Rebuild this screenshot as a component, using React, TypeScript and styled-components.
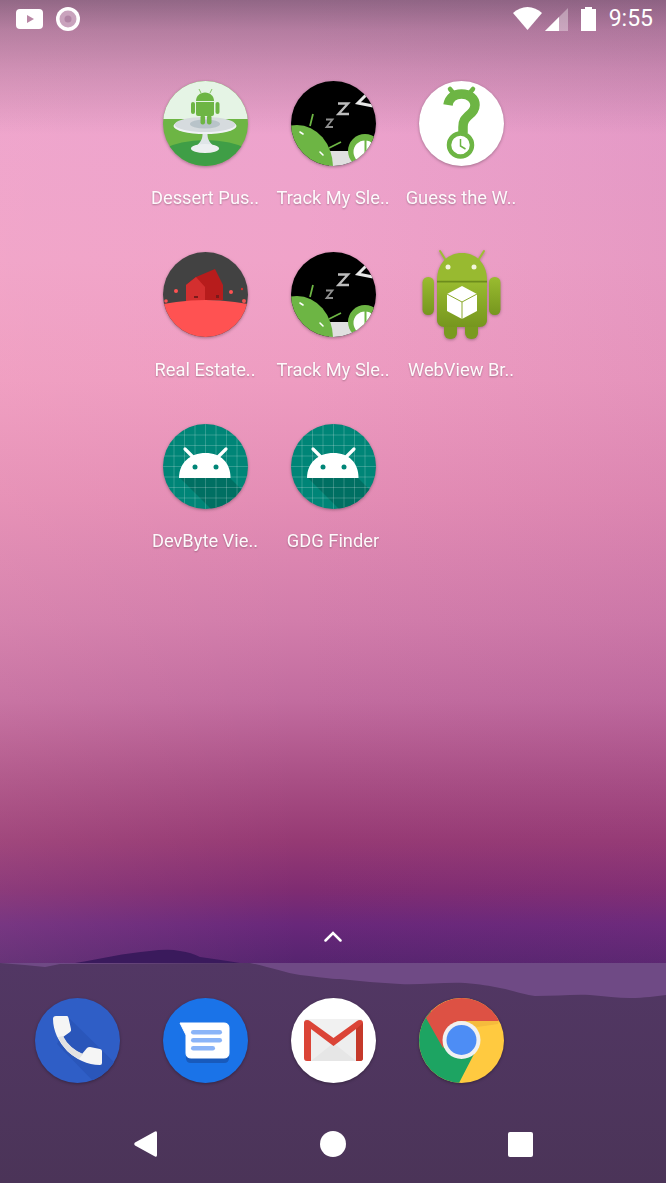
import styled, { createGlobalStyle } from 'styled-components';

const GlobalStyle = createGlobalStyle`
  html, body {
    margin: 0;
    padding: 0;
    background: #4c3459;
  }
`;

const Phone = styled.div`
  position: relative;
  width: 666px;
  height: 1183px;
  overflow: hidden;
  display: flex;
  flex-direction: column;
  font-family: Roboto, "Liberation Sans", sans-serif;
  background:
    linear-gradient(
      180deg,
      rgba(60, 50, 70, 0.5) 0px,
      rgba(60, 50, 70, 0.3) 30px,
      rgba(60, 50, 70, 0.16) 70px,
      rgba(60, 50, 70, 0) 135px
    ),
    linear-gradient(90deg, rgba(255, 190, 200, 0.1) 0%, rgba(255, 190, 200, 0) 45%, rgba(150, 70, 140, 0.1) 100%),
    linear-gradient(
      180deg,
      #e79bc6 0px,
      #eda3cd 130px,
      #f0a3c9 260px,
      #ee9cc1 380px,
      #e48db5 500px,
      #d27dab 620px,
      #c26c9f 700px,
      #a94f85 780px,
      #963a74 840px,
      #7f2c72 890px,
      #68277a 925px,
      #56246f 963px
    );
`;

const StatusBar = styled.header`
  flex: none;
  height: 38px;
  padding: 0 13px 0 16px;
  display: flex;
  align-items: center;
  gap: 13px;
`;

const StatusRight = styled.div`
  margin-left: auto;
  display: flex;
  align-items: center;
`;

const Clock = styled.span`
  margin-left: 13px;
  color: #fff;
  font-size: 23px;
  line-height: 38px;
  font-weight: 400;
`;

const Workspace = styled.main`
  flex: 1;
  padding: 43px 13px 0;
  display: grid;
  grid-template-columns: repeat(5, 128px);
  grid-auto-rows: 171.5px;
  align-content: start;
`;

const AppCell = styled.div`
  display: flex;
  flex-direction: column;
  align-items: center;
`;

const IconBox = styled.div`
  width: 85px;
  height: 85px;
  flex: none;
  svg {
    display: block;
    overflow: visible;
    filter: drop-shadow(0 1px 1.5px rgba(0, 0, 0, 0.3));
  }
`;

const WorkspaceIcon = styled(IconBox)`
  margin-top: -0.4px;
`;

const AppLabel = styled.span`
  margin-top: 20.4px;
  color: #fff;
  font-size: 18.3px;
  line-height: 24px;
  white-space: nowrap;
  opacity: 0.95;
  text-shadow: 0 1px 2px rgba(0, 0, 0, 0.3);
`;

const CaretRow = styled.div`
  flex: none;
  height: 32px;
  display: flex;
  justify-content: center;
  align-items: flex-start;
`;

const Dock = styled.footer`
  position: relative;
  flex: none;
  height: 220px;
  background: #6f4a85;
`;

const Hills = styled.svg`
  position: absolute;
  left: 0;
  top: -20px;
`;

const DockRow = styled.div`
  position: relative;
  padding: 35px 13px 0;
  display: grid;
  grid-template-columns: repeat(5, 128px);
  justify-items: center;
`;

const NavBar = styled.nav`
  position: relative;
  margin-top: 48px;
  display: grid;
  grid-template-columns: repeat(3, 187.5px);
  justify-content: center;
  justify-items: center;
  align-items: center;
  height: 26px;
`;

const HomeButton = styled.span`
  width: 26px;
  height: 26px;
  border-radius: 50%;
  background: #fff;
`;

const RecentButton = styled.span`
  width: 25px;
  height: 25px;
  border-radius: 2px;
  background: #fff;
`;

const Disc = ({ id, children }: { id: string; children: React.ReactNode }) => (
  <svg width="85" height="85" viewBox="0 0 85 85">
    <clipPath id={id}>
      <circle cx="42.5" cy="42.5" r="42.5" />
    </clipPath>
    <g clipPath={`url(#${id})`}>{children}</g>
  </svg>
);

const DessertIcon = () => (
  <Disc id="dessert">
    <rect width="85" height="85" fill="#6db544" />
    <rect width="85" height="38" fill="#e5f4e5" />
    <ellipse cx="42.5" cy="92" rx="62" ry="33" fill="#3f9e46" />
    <path d="M36 8l2 4M49 8l-2 4" stroke="#6db544" strokeWidth="0.8" />
    <path d="M33 20c0-5 4-8.500 9-8.500s9 3.500 9 8.500z" fill="#6db544" />
    <path d="M33 21h18v12q0 2-2 2H35q-2 0-2-2z" fill="#6db544" />
    <rect x="28" y="21" width="4" height="12" rx="2" fill="#6db544" />
    <rect x="52.500" y="21" width="4" height="12" rx="2" fill="#6db544" />
    <ellipse cx="42" cy="45" rx="31.500" ry="8" fill="#f0f2f4" />
    <ellipse cx="42" cy="43.500" rx="30.500" ry="7.500" fill="#d6dbde" />
    <ellipse cx="42" cy="43" rx="15" ry="4.500" fill="#b8c3c9" />
    <rect x="37.500" y="34" width="4.500" height="9.500" rx="2" fill="#6db544" />
    <rect x="44" y="34" width="4.500" height="9.500" rx="2" fill="#6db544" />
    <path d="M39.500 53h5c0 4 1 7 5 11H34.500c4-4 5-7 5-11z" fill="#dfe5e8" />
    <ellipse cx="42" cy="67.500" rx="14" ry="4.500" fill="#eceff1" />
  </Disc>
);

const SleepIcon = ({ id }: { id: string }) => (
  <Disc id={id}>
    <rect width="85" height="85" fill="#000" />
    <rect x="38" y="70" width="47" height="15" fill="#e0e0e0" />
    <path d="M19 45l3-12M38 67l12-6" stroke="#6db544" strokeWidth="1.800" />
    <ellipse cx="6" cy="86" rx="36" ry="42" fill="#6db544" />
    <path d="M9 51l3 2M29 71l3 3" stroke="#fff" strokeWidth="1.600" strokeLinecap="round" />
    <circle cx="74" cy="70" r="17" fill="#6db544" />
    <circle cx="74" cy="71" r="11.500" fill="#fff" />
    <path d="M74.500 59v16" stroke="#6db544" strokeWidth="2" />
    <path d="M35 38.500h6.500L35.500 46H42" fill="none" stroke="#8f8f8f" strokeWidth="1.800" />
    <path d="M47 22.500h10L47.500 33H58" fill="none" stroke="#bdbdbd" strokeWidth="2.400" />
    <path d="M78 11L67 22l15 3" fill="none" stroke="#e8e8e8" strokeWidth="3" />
    <path d="M64 4l5-1" stroke="#fff" strokeWidth="2" />
  </Disc>
);

const GuessIcon = () => (
  <Disc id="guess">
    <rect width="85" height="85" fill="#fff" />
    <path d="M31 8l5 6M54 8l-5 6" stroke="#6db544" strokeWidth="4.500" strokeLinecap="round" />
    <path
      d="M29 24c1-7 6-11 13.500-11 8 0 13.500 5 13.500 11 0 5-3 8-7 11-3 3-5 5-5 11v6"
      fill="none"
      stroke="#6db544"
      strokeWidth="9.500"
    />
    <circle cx="41.500" cy="64" r="11.500" fill="#fff" stroke="#6db544" strokeWidth="4.500" />
    <path d="M41.500 58v7l5 3" fill="none" stroke="#6db544" strokeWidth="1.500" />
  </Disc>
);

const EstateIcon = () => (
  <Disc id="estate">
    <rect width="85" height="85" fill="#424242" />
    <path d="M23 33l10-8 19-8 8 16v15H23z" fill="#b71c1c" />
    <path d="M23 33l10-8 9 10v15H23z" fill="#d32f2f" />
    <path d="M31 44h4v2h-4zM53 43h3v3h-3z" fill="#7a1a1a" />
    <circle cx="13" cy="39" r="2" fill="#ff5252" />
    <circle cx="68" cy="40" r="2" fill="#ff5252" />
    <circle cx="79" cy="37" r="1.200" fill="#d32f2f" />
    <circle cx="3" cy="49" r="1.800" fill="#ff5252" />
    <circle cx="81" cy="49" r="2" fill="#ef5350" />
    <ellipse cx="42.500" cy="148" rx="150" ry="100" fill="#ff5252" />
  </Disc>
);

const WebViewIcon = () => (
  <svg width="85" height="85" viewBox="0 0 85 85">
    <defs>
      <linearGradient id="wv" x1="0" y1="0" x2="0" y2="1">
        <stop offset="0" stopColor="#9abc30" />
        <stop offset="1" stopColor="#76961e" />
      </linearGradient>
    </defs>
    <g transform="translate(-1 0)">
      <path d="M27 7l-5-8M61 7l5-8" stroke="#9dbf33" strokeWidth="2" strokeLinecap="round" />
      <rect x="4.500" y="25" width="11.500" height="38" rx="5.500" fill="url(#wv)" />
      <rect x="71" y="25" width="11.500" height="38" rx="5.500" fill="url(#wv)" />
      <rect x="26" y="62" width="13" height="25" rx="6" fill="#7a9a20" />
      <rect x="47" y="62" width="13" height="25" rx="6" fill="#7a9a20" />
      <path d="M19 28h50v40c0 4-3 7-7 7H26c-4 0-7-3-7-7z" fill="url(#wv)" />
      <rect x="19" y="28.500" width="50" height="2" fill="#6d8c1c" />
      <path d="M19 28.500C19 10 31 1 44 1s25 9 25 27.500z" fill="#98ba30" />
      <circle cx="30" cy="15" r="2.500" fill="#f3f6dc" />
      <circle cx="56" cy="15" r="2.500" fill="#f3f6dc" />
      <path d="M44 34l15 8v17l-15 8-15-8V42z" fill="#fff" />
      <path d="M29 42l15 8 15-8M44 50v17" fill="none" stroke="#8aa82a" strokeWidth="1" />
    </g>
  </svg>
);

const DefaultIcon = ({ id }: { id: string }) => (
  <Disc id={id}>
    <rect width="85" height="85" fill="#008577" />
    <path d="M17 54h50l28 28v3H48z" fill="#00695c" opacity="0.8" />
    <g stroke="#fff" strokeOpacity="0.25" strokeWidth="0.800">
      {[11, 21.500, 32, 42.500, 53, 63.500, 74].map((p) => (
        <path key={p} d={`M${p} 0v85M0 ${p}h85`} />
      ))}
    </g>
    <path d="M22 25l8 8M63 25l-8 8" stroke="#fff" strokeWidth="3.200" strokeLinecap="round" />
    <path d="M16 54c0-15 11-25 26.500-25S67.500 39 67.500 54z" fill="#fff" />
    <circle cx="32" cy="43" r="2.500" fill="#008577" />
    <circle cx="53" cy="43" r="2.500" fill="#008577" />
  </Disc>
);

const PhoneIcon = () => (
  <Disc id="dial">
    <rect width="85" height="85" fill="#2f5ec6" />
    <path d="M34 20L85 70v15H60L22 46z" fill="#2a56ba" />
    <path
      d="M21 18h11q1 0 1.500 2l2.500 11q.5 2-1 3l-7 5q6 11 19 17l5-6q1-1 3-1l10 2q2 .5 2 2v12q0 2-2 2C40 67 18 44 18 21q0-3 3-3z"
      fill="#f5f5f5"
    />
    <path d="M23 39l5-1q6 12 20 18l-4 5q-14-6-21-22z" fill="#e2e2e2" />
  </Disc>
);

const MessagesIcon = () => (
  <Disc id="messages">
    <rect width="85" height="85" fill="#1a73e8" />
    <path d="M23 50h43v10q0 5-5 5H28q-5 0-5-5z" fill="#185abc" />
    <path d="M17 25h44q5 0 5 5v25q0 5-5 5H28q-5 0-5-5V37z" fill="#fff" stroke="#fff" strokeLinejoin="round" />
    <rect x="28" y="32" width="31" height="4.500" rx="2.250" fill="#8ab4f8" />
    <rect x="28" y="40" width="31" height="4.500" rx="2.250" fill="#8ab4f8" />
    <rect x="28" y="48" width="24" height="4.500" rx="2.250" fill="#8ab4f8" />
  </Disc>
);

const GmailIcon = () => (
  <Disc id="gmail">
    <rect width="85" height="85" fill="#fff" />
    <rect x="14" y="21" width="57" height="42" fill="#eeeeee" />
    <path d="M20 63l22.500-18L65 63z" fill="#e6e6e6" />
    <path d="M14 21h57v2L42.500 44 14 23z" fill="#f1f1f1" />
    <path d="M13 25q0-3 3-3 2 0 3 1l23.500 17L66 23q1-1 3-1 3 0 3 3v35q0 3-3 3h-4V31L42.500 48 20 31v32h-4q-3 0-3-3z" fill="#db4437" />
    <path d="M65 31l7-6v35q0 3-3 3h-4z" fill="#c5392a" />
  </Disc>
);

const ChromeIcon = () => (
  <Disc id="chrome">
    <rect width="85" height="85" fill="#ffca40" />
    <path d="M0 0h7L25 50l30 6-15 29H0z" fill="#1da462" />
    <path d="M7 20C15 8 28 0 42.500 0 60 0 74 9 80 23H42.500C34 23 27 28 24 50z" fill="#dd5144" />
    <path d="M42.500 23H80l-1 3-21 3z" fill="#e8a83a" opacity="0.45" />
    <circle cx="42.500" cy="42" r="19" fill="#f1f1f1" />
    <circle cx="42.500" cy="42" r="15" fill="#4d8df5" />
  </Disc>
);

const YoutubeIcon = () => (
  <svg width="27" height="20" viewBox="0 0 27 20">
    <rect width="27" height="20" rx="4" fill="#fff" />
    <path d="M11 6v8l7-4z" fill="#b987a5" />
  </svg>
);

const RecordIcon = () => (
  <svg width="24" height="24" viewBox="0 0 24 24">
    <circle cx="12" cy="12" r="12" fill="#fff" />
    <circle cx="12" cy="12" r="8.500" fill="#c9a3bd" />
    <circle cx="12" cy="12" r="3.500" fill="#b084a4" />
  </svg>
);

const WifiIcon = () => (
  <svg width="29" height="24" viewBox="0 0 29 24">
    <path d="M14.500 23L0 6C4 2.500 9 0 14.500 0S25 2.500 29 6z" fill="#fff" />
  </svg>
);

const SignalIcon = () => (
  <svg width="23" height="23" viewBox="0 0 23 23" style={{ marginLeft: 3 }}>
    <path d="M0 23L23 0v23z" fill="#fff" fillOpacity="0.35" />
    <path d="M0 23L14 9v14z" fill="#fff" />
  </svg>
);

const BatteryIcon = () => (
  <svg width="15" height="24" viewBox="0 0 15 24" style={{ marginLeft: 13 }}>
    <path d="M4 2V0h7v2h4v22H0V2z" fill="#fff" />
  </svg>
);

const CaretIcon = () => (
  <svg width="18" height="11" viewBox="0 0 18 11">
    <path d="M1.500 9.500L9 2l7.500 7.500" fill="none" stroke="#fff" strokeWidth="2.500" strokeLinecap="round" />
  </svg>
);

const BackIcon = () => (
  <svg width="23" height="26" viewBox="0 0 23 26">
    <path d="M21 .5q2-1 2 1.500v22q0 2.500-2 1.500L1 14.500q-1.500-1.500 0-3z" fill="#fff" />
  </svg>
);

const apps = [
  { label: 'Dessert Pus..', icon: <DessertIcon /> },
  { label: 'Track My Sle..', icon: <SleepIcon id="sleep1" /> },
  { label: 'Guess the W..', icon: <GuessIcon /> },
  { label: 'Real Estate..', icon: <EstateIcon /> },
  { label: 'Track My Sle..', icon: <SleepIcon id="sleep2" /> },
  { label: 'WebView Br..', icon: <WebViewIcon /> },
  { label: 'DevByte Vie..', icon: <DefaultIcon id="devbyte" /> },
  { label: 'GDG Finder', icon: <DefaultIcon id="gdg" /> },
];

const rows = [apps.slice(0, 3), apps.slice(3, 6), apps.slice(6)];

const App = () => {
  return (
    <Phone>
      <GlobalStyle />
      <StatusBar>
        <YoutubeIcon />
        <RecordIcon />
        <StatusRight>
          <WifiIcon />
          <SignalIcon />
          <BatteryIcon />
          <Clock>9:55</Clock>
        </StatusRight>
      </StatusBar>
      <Workspace>
        {rows.flatMap((row, r) => [
          <span key={`lead-${r}`} />,
          ...row.map((app) => (
            <AppCell key={`${r}-${app.label}`}>
              <WorkspaceIcon>{app.icon}</WorkspaceIcon>
              <AppLabel>{app.label}</AppLabel>
            </AppCell>
          )),
          ...Array.from({ length: 4 - row.length }, (_, i) => <span key={`tail-${r}-${i}`} />),
        ])}
      </Workspace>
      <CaretRow>
        <CaretIcon />
      </CaretRow>
      <Dock>
        <Hills width="666" height="240" viewBox="0 0 666 240">
          <path d="M75 20C100 16 125 10 150 8c10-1 20-2 30 0 8 1 14 3 20 6 14 2 28 4 40 6z" fill="#3a1a5c" />
          <defs>
            <linearGradient id="dockFill" x1="0" y1="0" x2="0" y2="1">
              <stop offset="0" stopColor="#523764" />
              <stop offset="1" stopColor="#4b3458" />
            </linearGradient>
          </defs>
          <path
            d="M0 20L25 22L45 24L60 21L250 20C270 24 285 30 300 32C320 34 330 36 340 36C360 38 380 40 400 41C420 42 445 39 465 40C480 41 490 43 500 45C515 48 525 52 535 53C555 53 575 51 590 52C605 53 618 55 630 55C645 55 655 53 666 52V240H0Z"
            fill="url(#dockFill)"
          />
        </Hills>
        <DockRow>
          <IconBox><PhoneIcon /></IconBox>
          <IconBox><MessagesIcon /></IconBox>
          <IconBox><GmailIcon /></IconBox>
          <IconBox><ChromeIcon /></IconBox>
        </DockRow>
        <NavBar>
          <BackIcon />
          <HomeButton />
          <RecentButton />
        </NavBar>
      </Dock>
    </Phone>
  );
};

export default App;
